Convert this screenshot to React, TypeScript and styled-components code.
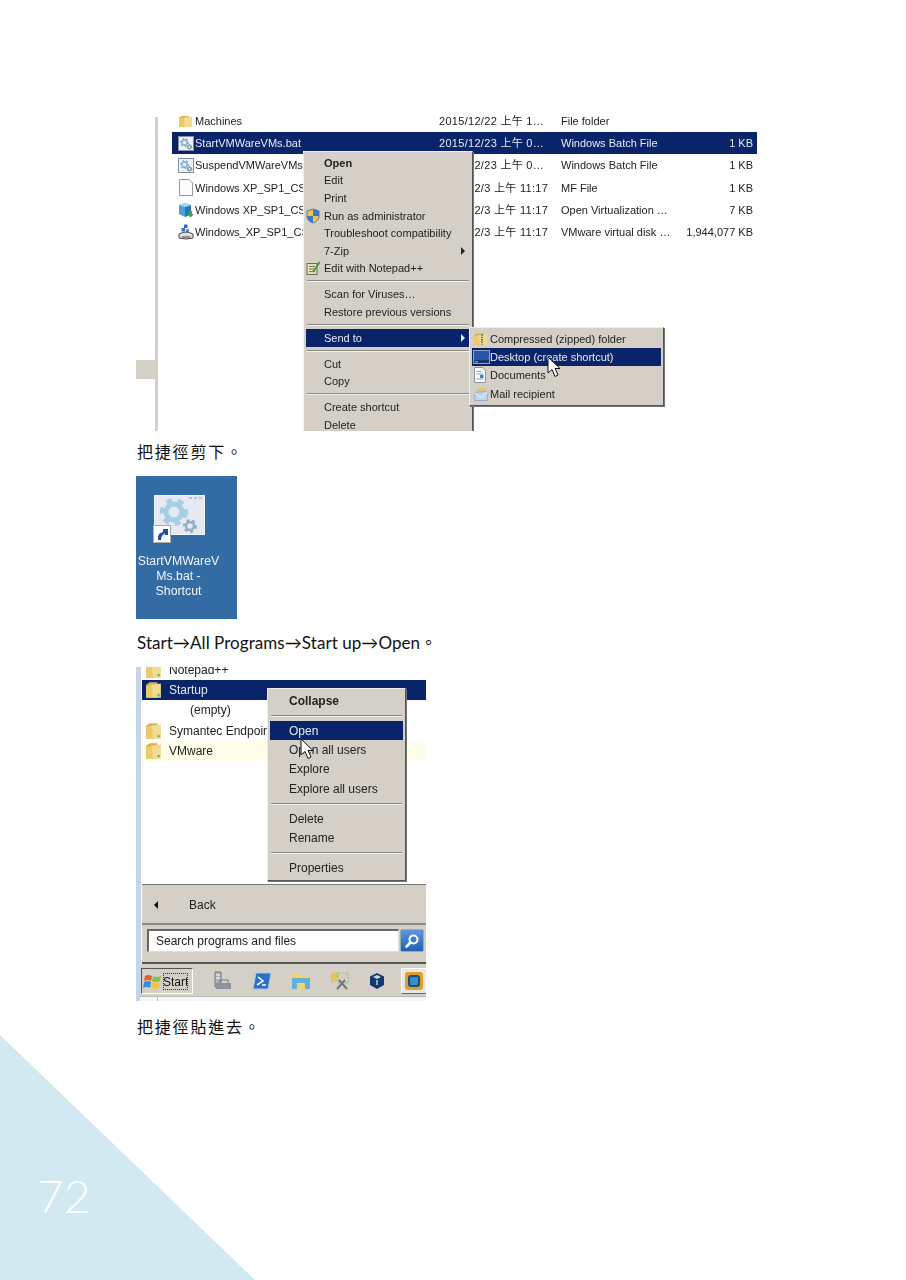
import React from "react";
import styled, { createGlobalStyle } from "styled-components";

const Global = createGlobalStyle`
  html, body { margin: 0; padding: 0; background: #fff; }
  body { font-family: "Liberation Sans", "Noto Sans CJK TC", sans-serif; }
  * { box-sizing: border-box; }
`;

const UI_FONT = `"Liberation Sans", "Noto Sans CJK TC", sans-serif`;
const GRAY = "#d4d0c8";
const NAVY = "#0a246a";

const Page = styled.div`
  width: 906px;
  height: 1280px;
  display: flex;
  flex-direction: column;
  overflow: hidden;
  background: #fff;
`;
const Content = styled.main`
  flex: none;
  height: 1035px;
  display: flex;
  flex-direction: column;
  align-items: flex-start;
  padding: 110px 0 0 136px;
  position: relative;
  z-index: 1;
  & > * {
    flex: none;
  }
`;
const Caption = styled.p`
  margin: 9px 0 14px 1px;
  height: 22px;
  font: 400 16px/22px "Noto Sans CJK TC", serif;
  letter-spacing: 1.8px;
  color: #111;
`;
const LastCaption = styled(Caption)`
  margin-top: 14px;
`;
const StepLine = styled.p`
  margin: 13px 0 13px 1px;
  height: 22px;
  font: 400 17px/22px Lato, "Noto Sans CJK TC", sans-serif;
  letter-spacing: 0.06px;
  color: #111;
  white-space: nowrap;
`;
const Shot = styled.section`
  position: relative;
  overflow: hidden;
  background: #fff;
  font: 400 11px/14px ${UI_FONT};
  color: #222;
  filter: blur(0.35px);
`;
const ExplorerShot = styled(Shot)`
  width: 621px;
  height: 321px;
  display: grid;
  grid-template-columns: 19px 3px 14px 585px;
`;
const Stub = styled.div`
  height: 19px;
  margin-top: 250px;
  background: ${GRAY};
  grid-column: 1;
`;
const Rule = styled.div`
  margin-top: 7px;
  background: ${GRAY};
  grid-column: 2;
`;
const FileList = styled.div`
  grid-column: 4;
  display: flex;
  flex-direction: column;
`;
const FileRow = styled.div<{ $on?: boolean }>`
  height: 22.2px;
  display: grid;
  grid-template-columns: 23px 244px 122px 1fr 68px;
  align-items: center;
  padding-right: 4px;
  white-space: nowrap;
  background: ${(p) => (p.$on ? NAVY : "transparent")};
  color: ${(p) => (p.$on ? "#e6eaf2" : "#222")};
`;
const IconCell = styled.span`
  display: flex;
  justify-content: center;
  padding-left: 4px;
`;
const DateCell = styled.span`
  letter-spacing: 0.3px;
`;
const SizeCell = styled.span`
  text-align: right;
`;
const Menu = styled.div<{ $x: number; $y: number; $w: number }>`
  position: absolute;
  left: ${(p) => p.$x}px;
  top: ${(p) => p.$y}px;
  width: ${(p) => p.$w}px;
  padding: 2px 2px;
  background: ${GRAY};
  border: 1px solid #eee;
  border-right-color: #555;
  border-bottom-color: #555;
  box-shadow: 1px 1px 0 #777;
  color: #222;
`;
const MenuItem = styled.div<{ $on?: boolean; $bold?: boolean; $h: number; $pad: number }>`
  position: relative;
  height: ${(p) => p.$h}px;
  display: flex;
  align-items: center;
  padding-left: ${(p) => p.$pad}px;
  white-space: nowrap;
  font-weight: ${(p) => (p.$bold ? 700 : 400)};
  background: ${(p) => (p.$on ? NAVY : "transparent")};
  color: ${(p) => (p.$on ? "#e6eaf2" : "#222")};
`;
const MenuGlyph = styled.span<{ $left: number }>`
  position: absolute;
  left: ${(p) => p.$left}px;
  top: 50%;
  transform: translateY(-50%);
  display: flex;
`;
const SubArrow = styled.span`
  position: absolute;
  right: 5px;
  top: 50%;
  margin-top: -4px;
  border-left: 4px solid currentColor;
  border-top: 4px solid transparent;
  border-bottom: 4px solid transparent;
`;
const MenuSep = styled.hr<{ $m: number }>`
  margin: ${(p) => p.$m}px 1px;
  height: 2px;
  border: 0;
  border-top: 1px solid #8a8a86;
  border-bottom: 1px solid #f2f2f0;
`;
const Pointer = styled.svg<{ $x: number; $y: number }>`
  position: absolute;
  left: ${(p) => p.$x}px;
  top: ${(p) => p.$y}px;
`;

const DesktopTile = styled.section`
  width: 101px;
  height: 143px;
  padding: 19px 16px 0 0;
  display: flex;
  flex-direction: column;
  align-items: center;
  background: #336ba4;
  color: #f1f5fa;
  font: 400 12.3px/15px ${UI_FONT};
  text-align: center;
  white-space: nowrap;
  filter: blur(0.35px);
`;
const TileIcon = styled.div`
  position: relative;
  width: 52px;
  height: 48px;
  margin-bottom: 11px;
`;
const ShortcutBadge = styled.span`
  position: absolute;
  left: 0;
  bottom: 0;
  width: 18px;
  height: 18px;
  display: flex;
`;

const StartShot = styled(Shot)`
  width: 290px;
  height: 334px;
  font-size: 12px;
  display: grid;
  grid-template-columns: 5px 1px 1fr;
  grid-template-rows: 217px 1fr;
`;
const BlueRail = styled.div`
  grid-row: 1 / 3;
  grid-column: 1;
  background: #c6d6ea;
`;
const Tree = styled.div`
  grid-column: 3;
  overflow: hidden;
  display: flex;
  flex-direction: column;
`;
const TreeRow = styled.div<{ $on?: boolean; $hint?: boolean; $first?: boolean; $indent?: boolean }>`
  flex: none;
  height: 20.4px;
  margin-top: ${(p) => (p.$first ? "-7.5px" : "0")};
  display: flex;
  align-items: center;
  gap: 7px;
  padding-left: ${(p) => (p.$indent ? "48px" : "3px")};
  background: ${(p) => (p.$on ? NAVY : p.$hint ? "#ffffe9" : "transparent")};
  color: ${(p) => (p.$on ? "#e6eaf2" : "#222")};
  white-space: nowrap;
`;
const Dock = styled.div`
  grid-column: 3;
  display: flex;
  flex-direction: column;
  background: ${GRAY};
  border-top: 1px solid #777;
`;
const BackRow = styled.div`
  flex: none;
  height: 40px;
  padding: 2px 0 0 12px;
  display: flex;
  align-items: center;
  gap: 31px;
  border-bottom: 2px solid #8b8b87;
`;
const BackArrow = styled.span`
  border-right: 4px solid #111;
  border-top: 4px solid transparent;
  border-bottom: 4px solid transparent;
`;
const SearchRow = styled.div`
  flex: none;
  height: 39px;
  display: flex;
  align-items: flex-start;
  gap: 1px;
  padding: 4px 0 0 5px;
  border-bottom: 2px solid #555;
`;
const SearchBox = styled.div`
  width: 252px;
  height: 23px;
  padding-left: 7px;
  display: flex;
  align-items: center;
  background: #fff;
  border: 1px solid #ddd;
  border-top: 2px solid #666;
  border-left: 2px solid #666;
  color: #222;
`;
const SearchButton = styled.div`
  width: 24px;
  height: 23px;
  display: flex;
  align-items: center;
  justify-content: center;
  border: 1px solid #9aa;
  border-radius: 2px;
  background: linear-gradient(#5d97dc, #1f5fb4);
`;
const Taskbar = styled.div`
  flex: none;
  height: 32px;
  margin-left: -1px;
  padding-top: 2px;
  display: flex;
  align-items: center;
  background: ${GRAY};
`;
const StartButton = styled.div`
  flex: none;
  width: 52px;
  height: 26px;
  display: flex;
  align-items: center;
  padding-left: 1px;
  border: 1px solid #555;
  border-right-color: #fff;
  border-bottom-color: #fff;
  font-size: 12px;
  color: #111;
`;
const StartLabel = styled.span`
  padding: 1px 0 0 0;
  line-height: 16px;
  outline: 1px dotted #333;
  outline-offset: -1px;
`;
const TaskIcons = styled.div`
  display: flex;
  align-items: center;
  margin-left: 20px;
  gap: 19px;
`;
const ActiveTask = styled.span`
  flex: none;
  width: 26px;
  height: 26px;
  margin-left: -3px;
  display: flex;
  align-items: center;
  justify-content: center;
  background: #e9e7e2;
  border: 1px solid #fff;
  border-right-color: #666;
  border-bottom-color: #666;
`;
const BottomStrip = styled.div`
  flex: 1;
  margin-left: -2px;
  background: #f4f6f8;
  border-top: 1px solid #bbb;
  padding-left: 17px;
`;
const StripTab = styled.div`
  height: 100%;
  border-left: 1px solid #bbb;
`;

const Footer = styled.footer`
  flex: none;
  width: 255px;
  height: 245px;
  display: flex;
  align-items: flex-start;
  padding: 131px 0 0 37px;
  background: #d2e9f2;
  clip-path: polygon(0 0, 100% 100%, 0 100%);
`;
const PageNumber = styled.span`
  font: 300 46px/60px Lato, "Open Sans", sans-serif;
  color: #fff;
`;

/* ------- icons ------- */
const Folder = ({ zip = false, big = false }: { zip?: boolean; big?: boolean }) => (
  <svg width={big ? 17 : 15} height={big ? 18 : 13} viewBox="0 0 15 14" preserveAspectRatio="none">
    <path d="M1 3 L1 13 L11 13 L11 1 L4 1 Z" fill="#d8b34e" />
    <path d="M5 3 L14 2 L14 13 L5 13 Z" fill="#f2dc90" />
    <path d="M1 4 L6 3 L7 13 L1 13 Z" fill="#eecb6a" />
    {zip && <path d="M9 2 V13" stroke="#555" strokeWidth="1.6" strokeDasharray="1.5 1" />}
    {!zip && big && <circle cx="12" cy="11" r="1" fill="#6bb36b" />}
  </svg>
);
const Gear = ({ cx, cy, r, c = "#6fa8c8" }: { cx: number; cy: number; r: number; c?: string }) => (
  <g>
    <circle cx={cx} cy={cy} r={r} fill="none" stroke={c} strokeWidth={r * 0.55} strokeDasharray={`${r * 0.5} ${r * 0.5}`} />
    <circle cx={cx} cy={cy} r={r * 0.72} fill="none" stroke={c} strokeWidth={r * 0.45} />
  </g>
);
const BatIcon = () => (
  <svg width="16" height="15" viewBox="0 0 16 15">
    <rect x="0.5" y="0.5" width="15" height="14" fill="#eef0f6" stroke="#7f8fa5" />
    <Gear cx={6.5} cy={6.5} r={3.6} c="#8fb4cc" />
    <Gear cx={11.5} cy={11} r={2.2} c="#6c8aa2" />
  </svg>
);
const DocIcon = () => (
  <svg width="14" height="17" viewBox="0 0 14 17">
    <path d="M.5.5H10L13.5 4V16.5H.5Z" fill="#fbfbfb" stroke="#9a9a9a" />
  </svg>
);
const OvfIcon = () => (
  <svg width="16" height="16" viewBox="0 0 16 16">
    <path d="M1 3 L7 1 L13 3 V12 L7 15 L1 12 Z" fill="#4f9fd6" />
    <path d="M7 5 L13 3 V12 L7 15 Z" fill="#2a78b4" />
    <path d="M1 3 L7 1 L13 3 L7 5 Z" fill="#a9d9f2" />
    <path d="M11 9 h3 v3 h2 l-3.5 3.5 L9 12 h2 Z" fill="#41a33f" />
  </svg>
);
const DiskIcon = () => (
  <svg width="16" height="16" viewBox="0 0 16 16">
    <rect x="6" y="0.5" width="3.5" height="3.5" fill="#3568c9" />
    <rect x="3.5" y="4" width="3.5" height="3.5" fill="#3568c9" />
    <rect x="8" y="5" width="3" height="3" fill="#5a8ae0" />
    <path d="M1 10 Q8 6 15 10 V14 Q8 16 1 14 Z" fill="#ddd" stroke="#444" />
    <path d="M4 13 H12" stroke="#444" />
  </svg>
);
const Shield = () => (
  <svg width="14" height="16" viewBox="0 0 14 16">
    <path d="M7 1 L13 3 V8 Q13 13 7 15 Q1 13 1 8 V3 Z" fill="#f3c93a" stroke="#5a76a8" />
    <path d="M7 1 L13 3 V8 H7 Z M7 8 V15 Q1 13 1 8 Z" fill="#3c78c8" />
  </svg>
);
const NotepadIcon = () => (
  <svg width="15" height="15" viewBox="0 0 15 15">
    <rect x="1" y="3" width="10" height="11" fill="#e9e4a6" stroke="#666" />
    <path d="M3 6H9M3 8.5H9M3 11H9" stroke="#777" />
    <path d="M7 10 L13 1 L14.5 2 L8.5 11 L7 12 Z" fill="#3d9a3d" />
  </svg>
);
const DesktopIcon = () => (
  <svg width="17" height="14" viewBox="0 0 17 14">
    <rect x="0.5" y="0.5" width="16" height="13" fill="#2a56a5" stroke="#8ba4cf" />
    <path d="M1 10 H16 V13 H1 Z" fill="#1a3570" />
    <rect x="2" y="11" width="3" height="1.5" fill="#6ea86e" />
  </svg>
);
const PaperIcon = () => (
  <svg width="14" height="16" viewBox="0 0 14 16">
    <path d="M1.5.5H9.5L12.5 3.5V15.5H1.5Z" fill="#fbfbfb" stroke="#8a96a8" />
    <path d="M3.5 4.5H8M3.5 7H10.5M3.5 12H10.5" stroke="#93a3b8" />
    <rect x="7" y="8" width="3.5" height="3" fill="#3a7ac8" />
  </svg>
);
const MailIcon = () => (
  <svg width="16" height="15" viewBox="0 0 16 15">
    <path d="M3 5 Q6 0 12 2 L14 6 Z" fill="#eac36a" />
    <path d="M1 6 L15 5 L14 14 L2 14 Z" fill="#bcd8f0" stroke="#7e9ec0" strokeWidth=".7" />
    <path d="M1 6 L8 11 L15 5" fill="none" stroke="#eef6fc" />
  </svg>
);
const CursorIcon = ({ x, y }: { x: number; y: number }) => (
  <Pointer $x={x} $y={y} width="14" height="22" viewBox="0 0 14 22">
    <path d="M1 1 V17 L5 13.5 L8 20.5 L11 19 L8 12.5 L13 12.5 Z" fill="#fff" stroke="#111" strokeWidth="1" strokeLinejoin="round" />
  </Pointer>
);
const BigGears = () => (
  <svg width="52" height="48" viewBox="0 0 52 48">
    <rect x="1.5" y="0.5" width="50" height="39" fill="#e6e8f4" stroke="#f4f5fb" />
    <path d="M36 3h3M41 3h3M46 3h3" stroke="#9a9ab0" />
    <Gear cx={21} cy={17} r={11} c="#a4cfe4" />
    <circle cx={21} cy={17} r={5} fill="#e6e8f4" />
    <Gear cx={37} cy={31} r={5.5} c="#8fb0c6" />
  </svg>
);
const ShortcutIcon = () => (
  <svg width="18" height="18" viewBox="0 0 18 18">
    <rect x="0.5" y="0.5" width="17" height="17" fill="#fff" stroke="#aaa" />
    <path d="M5 15 Q4 8 10 7 V4 L15 4 V10 L12 10 V8.5 Q8 10 8 15 Z" fill="#1f4fa3" />
  </svg>
);
const MagnifierIcon = () => (
  <svg width="16" height="16" viewBox="0 0 16 16">
    <circle cx="9.5" cy="6.5" r="4" fill="#3e80d0" stroke="#fff" strokeWidth="2" />
    <path d="M6.5 9.5 L2.5 13.5" stroke="#fff" strokeWidth="2.6" strokeLinecap="round" />
  </svg>
);
const WinLogo = () => (
  <svg width="20" height="19" viewBox="0 0 20 17">
    <path d="M2 3 Q5 1 9 3 L8 8 Q5 6 1 8 Z" fill="#e8602c" />
    <path d="M10 3 Q14 5 18 3 L17 8 Q13 10 9 8 Z" fill="#8cbf3f" />
    <path d="M1 9 Q5 7 8 9 L7 15 Q4 13 0 15 Z" fill="#3a8ce0" />
    <path d="M9 9 Q13 11 17 9 L16 15 Q12 16 8 15 Z" fill="#f4c43a" />
  </svg>
);
const ServerIcon = () => (
  <svg width="20" height="20" viewBox="0 0 20 20">
    <path d="M2 1H8V16H2Z" fill="#a9b2bb" stroke="#6f7a85" />
    <path d="M3 4H7M3 7H7" stroke="#fff" />
    <path d="M3 12H18V18H3Z" fill="#8a949e" />
    <path d="M7 12V9H15V12" fill="none" stroke="#6f7a85" />
  </svg>
);
const PsIcon = () => (
  <svg width="20" height="18" viewBox="0 0 20 18">
    <path d="M4 1H19L16 17H1Z" fill="#2a6fc0" stroke="#a8c8ea" />
    <path d="M6 5L11 9L5 13M10 13H14" fill="none" stroke="#fff" strokeWidth="1.6" />
  </svg>
);
const ExplorerIcon = () => (
  <svg width="20" height="18" viewBox="0 0 20 18">
    <path d="M1 2H8L10 4H19V17H1Z" fill="#f3d26e" />
    <path d="M1 6H19V17H14V11H6V17H1Z" fill="#62b0dc" />
  </svg>
);
const ToolsIcon = () => (
  <svg width="20" height="20" viewBox="0 0 20 20">
    <path d="M1 2L8 1V10L1 12Z" fill="#e8c45e" />
    <rect x="8" y="2" width="10" height="10" fill="none" stroke="#7ec27e" strokeDasharray="2 1.5" />
    <path d="M7 18L15 9M9 9L17 18" stroke="#777" strokeWidth="2" />
  </svg>
);
const CubeIcon = () => (
  <svg width="16" height="18" viewBox="0 0 16 18">
    <path d="M8 1L15 4.5V13L8 17L1 13V4.5Z" fill="#123a70" />
    <path d="M4 5L8 3L12 5L8 7Z" fill="#c8d8e8" />
    <path d="M8 8V13" stroke="#c8d8e8" strokeWidth="1.4" />
  </svg>
);
const ActiveAppIcon = () => (
  <svg width="20" height="20" viewBox="0 0 20 20">
    <rect x="1" y="1" width="18" height="18" rx="3" fill="#e0a028" />
    <rect x="5" y="5" width="10" height="10" rx="2" fill="#3a8cc4" stroke="#1a4c7c" strokeWidth="2" />
  </svg>
);

/* ------- data ------- */
const files: { icon: React.ReactNode; name: string; date: string; type: string; size: string; on?: boolean }[] = [
  { icon: <Folder />, name: "Machines", date: "2015/12/22 上午 1…", type: "File folder", size: "" },
  { icon: <BatIcon />, name: "StartVMWareVMs.bat", date: "2015/12/23 上午 0…", type: "Windows Batch File", size: "1 KB", on: true },
  { icon: <BatIcon />, name: "SuspendVMWareVMs.bat", date: "2015/12/23 上午 0…", type: "Windows Batch File", size: "1 KB" },
  { icon: <DocIcon />, name: "Windows XP_SP1_CSP.mf", date: "2015/12/3 上午 11:17", type: "MF File", size: "1 KB" },
  { icon: <OvfIcon />, name: "Windows XP_SP1_CSP.ovf", date: "2015/12/3 上午 11:17", type: "Open Virtualization …", size: "7 KB" },
  { icon: <DiskIcon />, name: "Windows_XP_SP1_CSP.vmdk", date: "2015/12/3 上午 11:17", type: "VMware virtual disk …", size: "1,944,077 KB" },
];

type Entry =
  | { sep: true }
  | { label: string; bold?: boolean; on?: boolean; arrow?: boolean; glyph?: React.ReactNode; sep?: false };

const fileMenu: Entry[] = [
  { label: "Open", bold: true },
  { label: "Edit" },
  { label: "Print" },
  { label: "Run as administrator", glyph: <Shield /> },
  { label: "Troubleshoot compatibility" },
  { label: "7-Zip", arrow: true },
  { label: "Edit with Notepad++", glyph: <NotepadIcon /> },
  { sep: true },
  { label: "Scan for Viruses…" },
  { label: "Restore previous versions" },
  { sep: true },
  { label: "Send to", on: true, arrow: true },
  { sep: true },
  { label: "Cut" },
  { label: "Copy" },
  { sep: true },
  { label: "Create shortcut" },
  { label: "Delete" },
];
const sendTo: Entry[] = [
  { label: "Compressed (zipped) folder", glyph: <Folder zip /> },
  { label: "Desktop (create shortcut)", on: true, glyph: <DesktopIcon /> },
  { label: "Documents", glyph: <PaperIcon /> },
  { label: "Mail recipient", glyph: <MailIcon /> },
];
const startMenu: Entry[] = [
  { label: "Collapse", bold: true },
  { sep: true },
  { label: "Open", on: true },
  { label: "Open all users" },
  { label: "Explore" },
  { label: "Explore all users" },
  { sep: true },
  { label: "Delete" },
  { label: "Rename" },
  { sep: true },
  { label: "Properties" },
];

const MenuBody = ({ items, h, pad, sepM, glyphLeft }: { items: Entry[]; h: number; pad: number; sepM: number; glyphLeft: number }) => (
  <>
    {items.map((it, i) =>
      it.sep ? (
        <MenuSep key={i} $m={sepM} />
      ) : (
        <MenuItem key={i} $h={h} $pad={pad} $on={it.on} $bold={it.bold}>
          {it.glyph && <MenuGlyph $left={glyphLeft}>{it.glyph}</MenuGlyph>}
          {it.label}
          {it.arrow && <SubArrow />}
        </MenuItem>
      )
    )}
  </>
);

export default function App() {
  return (
    <Page>
      <Global />
      <Content>
        <ExplorerShot>
          <Stub />
          <Rule />
          <FileList>
            {files.map((f) => (
              <FileRow key={f.name} $on={f.on}>
                <IconCell>{f.icon}</IconCell>
                <span>{f.name}</span>
                <DateCell>{f.date}</DateCell>
                <span>{f.type}</span>
                <SizeCell>{f.size}</SizeCell>
              </FileRow>
            ))}
          </FileList>
          <Menu $x={167} $y={41} $w={170}>
            <MenuBody items={fileMenu} h={17.6} pad={18} sepM={3.2} glyphLeft={0} />
          </Menu>
          <Menu $x={333} $y={217} $w={195}>
            <MenuBody items={sendTo} h={18.2} pad={18} sepM={4} glyphLeft={1} />
          </Menu>
          <CursorIcon x={411} y={246} />
        </ExplorerShot>
        <Caption>把捷徑剪下。</Caption>
        <DesktopTile>
          <TileIcon>
            <BigGears />
            <ShortcutBadge>
              <ShortcutIcon />
            </ShortcutBadge>
          </TileIcon>
          <span>StartVMWareV</span>
          <span>Ms.bat -</span>
          <span>Shortcut</span>
        </DesktopTile>
        <StepLine>Start→All Programs→Start up→Open。</StepLine>
        <StartShot>
          <BlueRail />
          <Tree>
            <TreeRow $first>
              <Folder big />
              Notepad++
            </TreeRow>
            <TreeRow $on>
              <Folder big />
              Startup
            </TreeRow>
            <TreeRow $indent>(empty)</TreeRow>
            <TreeRow>
              <Folder big />
              Symantec Endpoint Protection
            </TreeRow>
            <TreeRow $hint>
              <Folder big />
              VMware
            </TreeRow>
          </Tree>
          <Dock>
            <BackRow>
              <BackArrow />
              Back
            </BackRow>
            <SearchRow>
              <SearchBox>Search programs and files</SearchBox>
              <SearchButton>
                <MagnifierIcon />
              </SearchButton>
            </SearchRow>
            <Taskbar>
              <StartButton>
                <WinLogo />
                <StartLabel>Start</StartLabel>
              </StartButton>
              <TaskIcons>
                <ServerIcon />
                <PsIcon />
                <ExplorerIcon />
                <ToolsIcon />
                <CubeIcon />
                <ActiveTask>
                  <ActiveAppIcon />
                </ActiveTask>
              </TaskIcons>
            </Taskbar>
            <BottomStrip>
              <StripTab />
            </BottomStrip>
          </Dock>
          <Menu $x={131} $y={21} $w={139}>
            <MenuBody items={startMenu} h={19.3} pad={19} sepM={4.4} glyphLeft={0} />
          </Menu>
          <CursorIcon x={164} y={71} />
        </StartShot>
        <LastCaption>把捷徑貼進去。</LastCaption>
      </Content>
      <Footer>
        <PageNumber>72</PageNumber>
      </Footer>
    </Page>
  );
}
